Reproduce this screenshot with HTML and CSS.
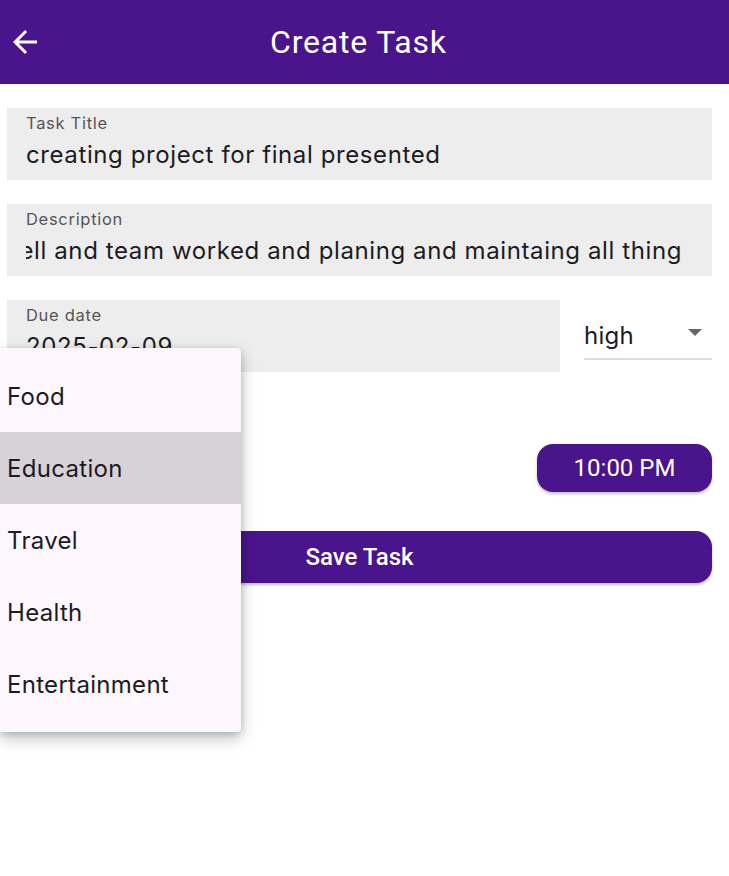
FILE: index.html
```html
<!DOCTYPE html>
<html>
<head>
<meta charset="utf-8">
<link rel="stylesheet" href="styles.css">
</head>
<body>
<header class="appbar">
  <svg class="back" width="36" height="36" viewBox="0 0 24 24"><path d="M20 11H7.83l5.59-5.59L12 4l-8 8 8 8 1.41-1.41L7.83 13H20v-2z" fill="#fff"/></svg>
  <h1 class="title">Create Task</h1>
</header>
<main class="form">
  <div class="field">
    <span class="label">Task Title</span>
    <div class="value">creating project for final presented</div>
  </div>
  <div class="field">
    <span class="label">Description</span>
    <div class="value scrolled"><span>the project very well and team worked and planing and maintaing all thing</span></div>
  </div>
  <div class="row">
    <div class="field grow">
      <span class="label">Due date</span>
      <div class="value">2025-02-09</div>
    </div>
    <div class="select">
      <span>high</span>
      <svg width="14" height="8" viewBox="0 0 14 8"><path d="M0 0h14L7 7z" fill="#666"/></svg>
    </div>
  </div>
  <div class="row gapped">
    <div class="spacer"></div>
  </div>
  <div class="row end">
    <button class="pill">10:00 PM</button>
  </div>
  <button class="save">Save Task</button>
</main>
<ul class="menu">
  <li>Food</li>
  <li class="active">Education</li>
  <li>Travel</li>
  <li>Health</li>
  <li>Entertainment</li>
</ul>
</body>
</html>
```
FILE: styles.css
```css
* { box-sizing: border-box; }
html, body { margin: 0; padding: 0; background: #fff; }
body { font-family: Inter, Roboto, "Liberation Sans", sans-serif; color: #1c1b1f; width: 729px; height: 876px; overflow: hidden; position: relative; }

.appbar { height: 84px; background: #4a148c; display: flex; align-items: center; position: relative; }
.back { position: absolute; left: 7px; top: 24px; }
.title { flex: 1; margin: 0; text-align: center; color: #fff; font-family: Roboto, sans-serif; font-size: 32px; font-weight: 400; letter-spacing: 0.8px; padding-right: 12px; }

.form { padding: 24px 17px 0 7px; display: flex; flex-direction: column; }
.field { background: #ededed; height: 72px; padding: 5px 19px 0 19px; margin-bottom: 24px; overflow: hidden; }
.label { display: block; font-size: 16.5px; color: #555; letter-spacing: 0.7px; line-height: 20px; }
.value { font-size: 24px; line-height: 44px; color: #1c1b1f; white-space: nowrap; letter-spacing: 0.6px; }
.scrolled { display: flex; justify-content: flex-end; overflow: hidden; padding-right: 11px; }
.scrolled span { flex: none; }

.row { display: flex; gap: 24px; }
.grow { flex: 1; }
.select { width: 128px; height: 60px; border-bottom: 2px solid #dcdcdc; display: flex; align-items: flex-end; justify-content: space-between; padding: 0 10px 8px 0; font-size: 24px; letter-spacing: 0.3px; }
.select svg { margin-bottom: 13px; }
.gapped { height: 48px; }
.end { justify-content: flex-end; }
.pill { width: 175px; height: 48px; border: none; border-radius: 16px; background: #4a148c; color: #fff; font-family: Roboto, sans-serif; font-size: 24px; box-shadow: 0 2px 3px rgba(0,0,0,0.25); }
.save { margin-top: 39px; height: 52px; border: none; border-radius: 16px; background: #4a148c; color: #fff; font-family: Roboto, sans-serif; font-size: 24px; font-weight: 500; box-shadow: 0 2px 3px rgba(0,0,0,0.25); }

.menu { position: absolute; left: 0; top: 348px; width: 241px; margin: 0; padding: 12px 0; list-style: none; background: #fdf6fd; border-radius: 0 4px 4px 0; box-shadow: 0 6px 16px rgba(0,0,0,0.25), 0 2px 6px rgba(0,0,0,0.15); }
.menu li { height: 72px; display: flex; align-items: center; padding-left: 7px; font-size: 24px; letter-spacing: 0.3px; }
.menu li.active { background: #d7d1d8; }
```
